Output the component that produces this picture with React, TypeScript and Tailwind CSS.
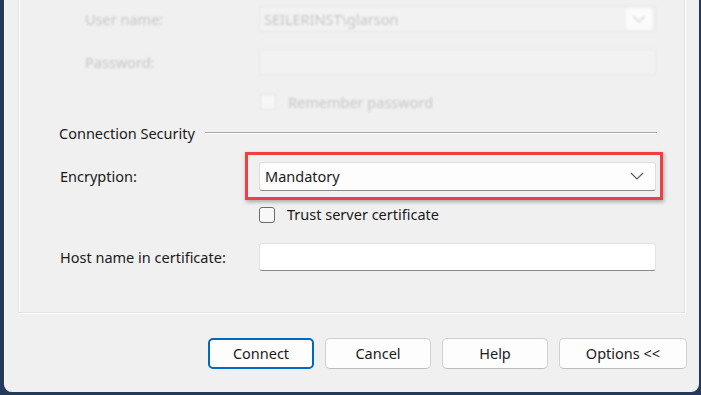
import { ReactNode } from 'react';

const font = { fontFamily: '"Noto Sans", "Liberation Sans", sans-serif' };

function Chevron({ className }: { className?: string }) {
    return (
        <svg width="14" height="8" viewBox="0 0 14 8" className={className}>
            <path d="M1 1 L7 7 L13 1" fill="none" stroke="currentColor" strokeWidth="1.2" />
        </svg>
    );
}

function Row({ label, children, className, indent }: { label?: string; children: ReactNode; className: string; indent?: boolean }) {
    return (
        <div className={`flex items-center ${className}`}>
            <div className={`w-[240px] shrink-0 whitespace-nowrap ${indent ? 'pl-[66px]' : 'pl-[41px]'}`}>{label}</div>
            <div className="w-[397px] h-full flex items-center">{children}</div>
        </div>
    );
}

function Button({ label, primary, width }: { label: string; primary?: boolean; width: string }) {
    return (
        <button
            className={`${width} h-[31px] rounded-[5px] bg-[#fdfdfd] text-[14.5px] leading-[20px] pb-[2px] text-[#1b1b1b] ${
                primary ? 'border-2 border-[#0067c0]' : 'border border-[#d0d0d0] border-b-[#bcbcbc]'
            }`}
        >
            {label}
        </button>
    );
}

export default function App() {
    return (
        <div className="w-[701px] h-[395px] bg-[#243a5c] overflow-hidden" style={font}>
            <div className="ml-[4px] w-[695px] h-[392px] bg-[#f0f0f0] rounded-b-[8px] border-l border-[#f9f9f9] flex flex-col">
                {/* Login panel */}
                <div className="ml-[13px] w-[667px] -mt-[10px] pt-[15px] pb-[41px] border border-[#e2e2e2] shadow-[inset_1px_1px_0_#ffffff,1px_1px_0_#ffffff] text-[14.5px] leading-[20px] text-[#1a1a1a]">
                    {/* Disabled (faded) fields */}
                    <div className="blur-[0.9px] text-[#c6c6c6]">
                        <Row label="User name:" indent className="h-[26px]">
                            <div className="w-[397px] h-[26px] border border-[#e6e6e6] rounded-[3px] bg-[#f2f2f2] flex items-center pl-[4px] pr-[3px]">
                                <span className="flex-1 pb-[1px]">SEILERINST\glarson</span>
                                <div className="w-[26px] h-[22px] bg-[#fbfbfb] rounded-[2px] flex items-center justify-center text-[#d4d4d4]">
                                    <Chevron />
                                </div>
                            </div>
                        </Row>
                        <Row label="Password:" indent className="h-[26px] mt-[17px]">
                            <div className="w-[397px] h-[26px] border border-[#e8e8e8] rounded-[3px] bg-[#f2f2f2]" />
                        </Row>
                        <Row className="h-[16px] mt-[19px]">
                            <div className="ml-[1px] w-[16px] h-[16px] rounded-[3px] border border-[#e2e2e2] bg-[#f6f6f6]" />
                            <span className="ml-[12px] pb-[1px]">Remember password</span>
                        </Row>
                    </div>

                    {/* Connection Security */}
                    <div className="h-[16px] mt-[15px] flex items-center pl-[40px] pr-[27px]">
                        <span className="pb-[1px]">Connection Security</span>
                        <div className="flex-1 ml-[10px] h-[2px] border-t border-[#a8a8a8] border-b border-b-[#ffffff]" />
                    </div>

                    <Row label="Encryption:" className="h-[29px] mt-[21px] pb-[1px]">
                        <div className="relative w-[397px] h-[29px]">
                            <div className="w-full h-full bg-[#fdfdfd] border border-[#dedede] border-b-[#8a8a8a] rounded-[3px] flex items-center pl-[5px] pr-[11px]">
                                <span className="flex-1 pb-[1px]">Mandatory</span>
                                <Chevron className="text-[#5c5c5c]" />
                            </div>
                            <div className="absolute -left-[14px] -right-[7px] -top-[10px] -bottom-[9px] border-[3px] border-[#ee3f44] shadow-[1px_2px_4px_rgba(0,0,0,0.3)]" />
                        </div>
                    </Row>

                    <Row className="h-[17px] mt-[15px]">
                        <div className="w-[16px] h-[16px] rounded-[3px] border border-[#6b6b6b] bg-[#f8f8f8]" />
                        <span className="ml-[12px] pb-[1px]">Trust server certificate</span>
                    </Row>

                    <Row label="Host name in certificate:" className="h-[28px] mt-[20px] pb-[1px]">
                        <div className="w-[397px] h-[28px] bg-[#ffffff] border border-[#e3e3e3] border-b-[#8a8a8a] rounded-[3px]" />
                    </Row>
                </div>

                {/* Buttons */}
                <div className="mt-[25px] flex pl-[203px] gap-[11px]">
                    <Button label="Connect" primary width="w-[106px]" />
                    <Button label="Cancel" width="w-[106px]" />
                    <Button label="Help" width="w-[106px]" />
                    <Button label="Options <<" width="w-[128px]" />
                </div>
            </div>
        </div>
    );
}
